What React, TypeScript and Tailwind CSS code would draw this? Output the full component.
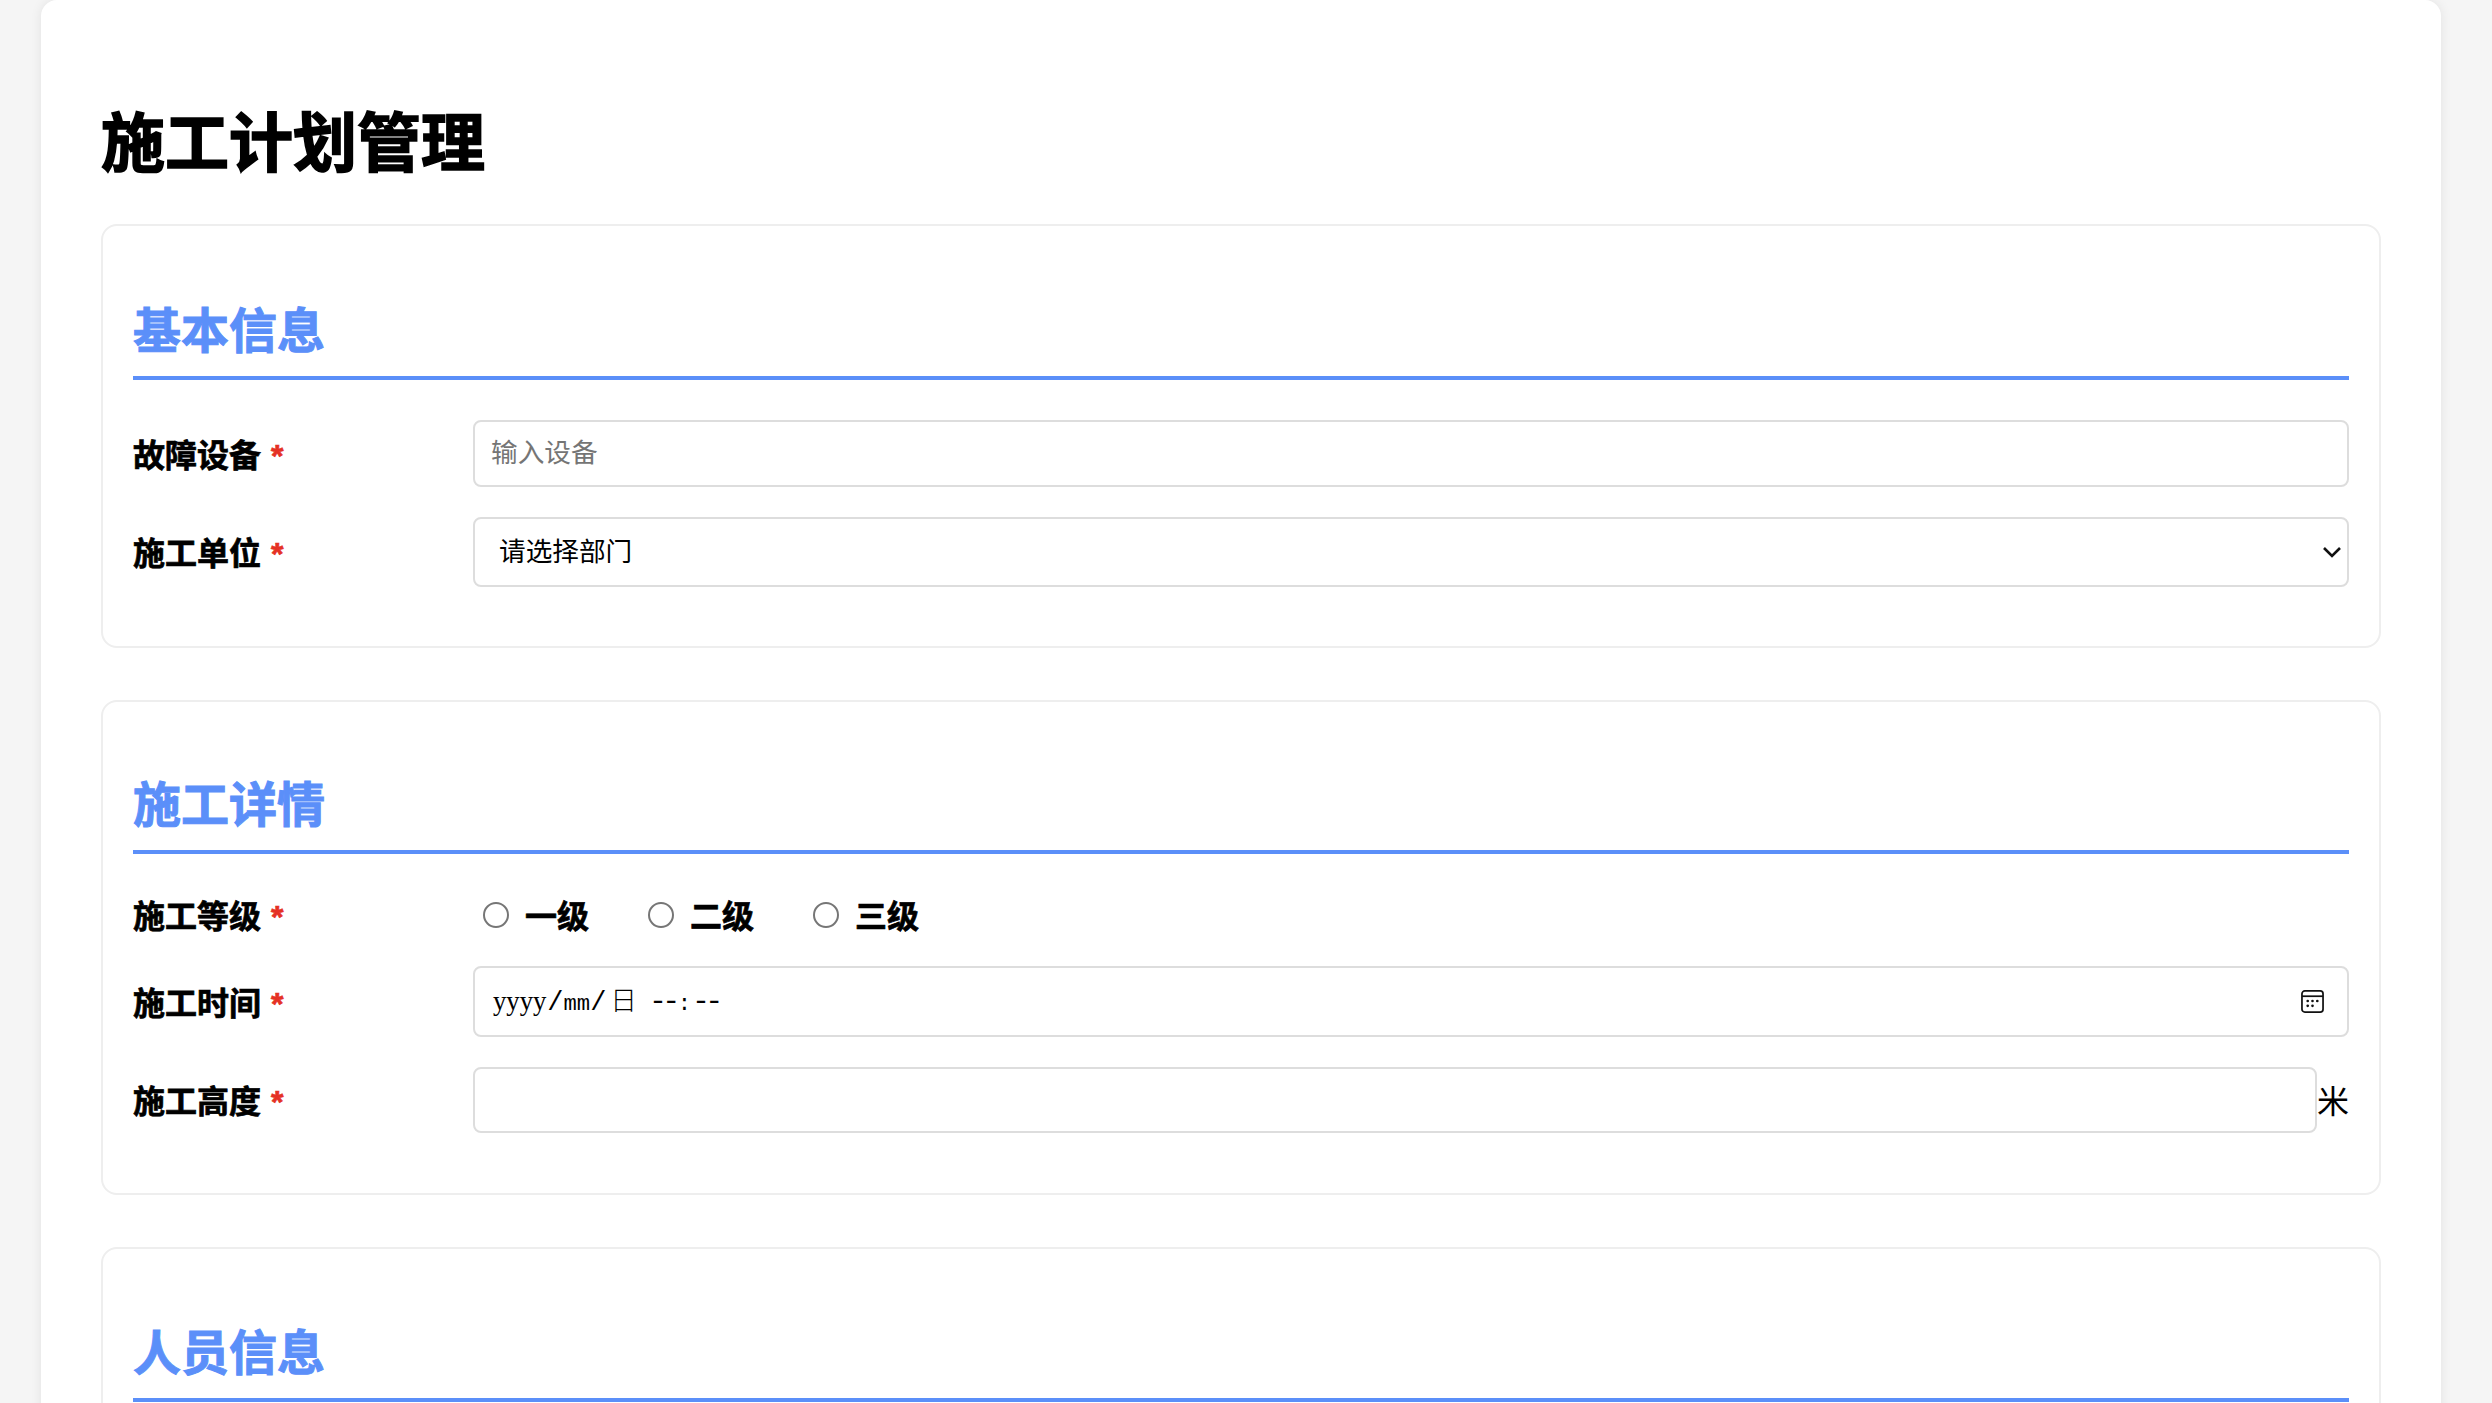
function Label({ text }: { text: string }) {
  return (
    <label className="w-[340px] shrink-0 pt-[4px] text-[32px] leading-[38px] font-bold text-black [-webkit-text-stroke:0.7px_currentColor]">
      {text}
      <span className="ml-[10px] text-[#e53124]">*</span>
    </label>
  );
}

function Heading({ text, className }: { text: string; className: string }) {
  return (
    <h2 className={`mb-[40px] border-b-[4px] border-[#5b8ff9] pb-[12px] text-[48px] leading-[64px] font-bold text-[#5b8ff9] [-webkit-text-stroke:1px_currentColor] ${className}`}>
      {text}
    </h2>
  );
}

const inputClass =
  "w-full rounded-[8px] border-2 border-[#dddddd] bg-white text-[26.67px] outline-none";

const radioClass = "h-[26px] w-[26px] appearance-none rounded-full border-2 border-[#767676] bg-white";

export default function App() {
  return (
    <div
      className="h-[1403px] overflow-hidden bg-[#f5f5f5] pr-[10px]"
      style={{ fontFamily: '"Liberation Sans", "Noto Sans CJK SC", sans-serif' }}
    >
      <main className="mx-auto w-[2400px] rounded-[16px] bg-white px-[60px] pt-[96px] shadow-[0_0_12px_rgba(0,0,0,0.08)]">
        <h1 className="mb-[32px] text-[64px] leading-[96px] font-bold text-black [-webkit-text-stroke:1.6px_currentColor]">施工计划管理</h1>

        {/* 基本信息 */}
        <section className="mb-[52px] rounded-[16px] border-2 border-[#eeeeee] px-[30px] pb-[59px]">
          <Heading text="基本信息" className="pt-[74px]" />
          <div className="flex flex-col gap-[30px]">
            <div className="flex items-center">
              <Label text="故障设备" />
              <input placeholder="输入设备" className={`${inputClass} h-[67px] px-[16px] placeholder:text-[#757575]`} />
            </div>
            <div className="flex items-center">
              <Label text="施工单位" />
              <div className="relative w-full">
                <select className={`${inputClass} h-[70px] appearance-none pl-[24px] text-black`}>
                  <option>请选择部门</option>
                </select>
                <svg viewBox="0 0 18 12" className="absolute top-[29px] right-[8px] h-[12px] w-[18px]" fill="none" stroke="#111111" strokeWidth="2.6">
                  <path d="M1 2l8 8 8-8" />
                </svg>
              </div>
            </div>
          </div>
        </section>

        {/* 施工详情 */}
        <section className="mb-[52px] rounded-[16px] border-2 border-[#eeeeee] px-[30px] pb-[60px]">
          <Heading text="施工详情" className="pt-[72px]" />
          <div className="flex flex-col gap-[30px]">
            <div className="flex items-center">
              <Label text="施工等级" />
              <div className="flex items-center gap-[59px] pl-[10px]">
                {["一级", "二级", "三级"].map((level) => (
                  <label key={level} className="flex items-center gap-[16px] text-[32px] leading-[42px] font-bold text-black [-webkit-text-stroke:0.7px_currentColor]">
                    <input type="radio" name="level" className={radioClass} />
                    <span className="pt-[4px] leading-[38px]">{level}</span>
                  </label>
                ))}
              </div>
            </div>
            <div className="flex items-center">
              <Label text="施工时间" />
              <div className={`${inputClass} flex h-[71px] items-center justify-between pr-[23px] pl-[18px]`}>
                <span className="inline-flex items-baseline pt-[2px] text-[22.2px] text-black" style={{ fontFamily: '"Liberation Mono", "Noto Sans CJK SC", monospace' }}>
                  <span className="text-[26.67px]" style={{ fontFamily: '"Liberation Serif", serif' }}>yyyy</span>
                  <span className="mr-[-2px] ml-[1px] text-[27px]">/</span>
                  <span className="ml-[2px]">mm</span>
                  <span className="mr-[-2px] text-[27px]">/</span>
                  <span className="ml-[6px] text-[26.67px] font-light">日</span>
                  <span className="ml-[12px] text-[30px] tracking-[-4.7px]">--</span>
                  <span className="ml-[2px]">:</span>
                  <span className="ml-[1px] text-[30px] tracking-[-4.7px]">--</span>
                </span>
                <svg viewBox="0 0 24 24" className="h-[23px] w-[23px]" fill="none" stroke="#111111" strokeWidth="1.8">
                  <rect x="1" y="1" width="22" height="22" rx="3" />
                  <path d="M1 6.5h22" />
                  <g fill="#111111" stroke="none">
                    <circle cx="7" cy="11.5" r="1.4" />
                    <circle cx="12" cy="11.5" r="1.4" />
                    <circle cx="17" cy="11.5" r="1.4" />
                    <circle cx="7" cy="16.5" r="1.4" />
                    <circle cx="12" cy="16.5" r="1.4" />
                  </g>
                </svg>
              </div>
            </div>
            <div className="flex items-center">
              <Label text="施工高度" />
              <input className={`${inputClass} h-[66px] min-w-0 flex-1`} />
              <span className="w-[32px] shrink-0 pt-[4px] text-[32px] leading-[38px] text-black">米</span>
            </div>
          </div>
        </section>

        {/* 人员信息 */}
        <section className="rounded-[16px] border-2 border-[#eeeeee] px-[30px] pb-[60px]">
          <Heading text="人员信息" className="pt-[73px]" />
        </section>
      </main>
    </div>
  );
}
